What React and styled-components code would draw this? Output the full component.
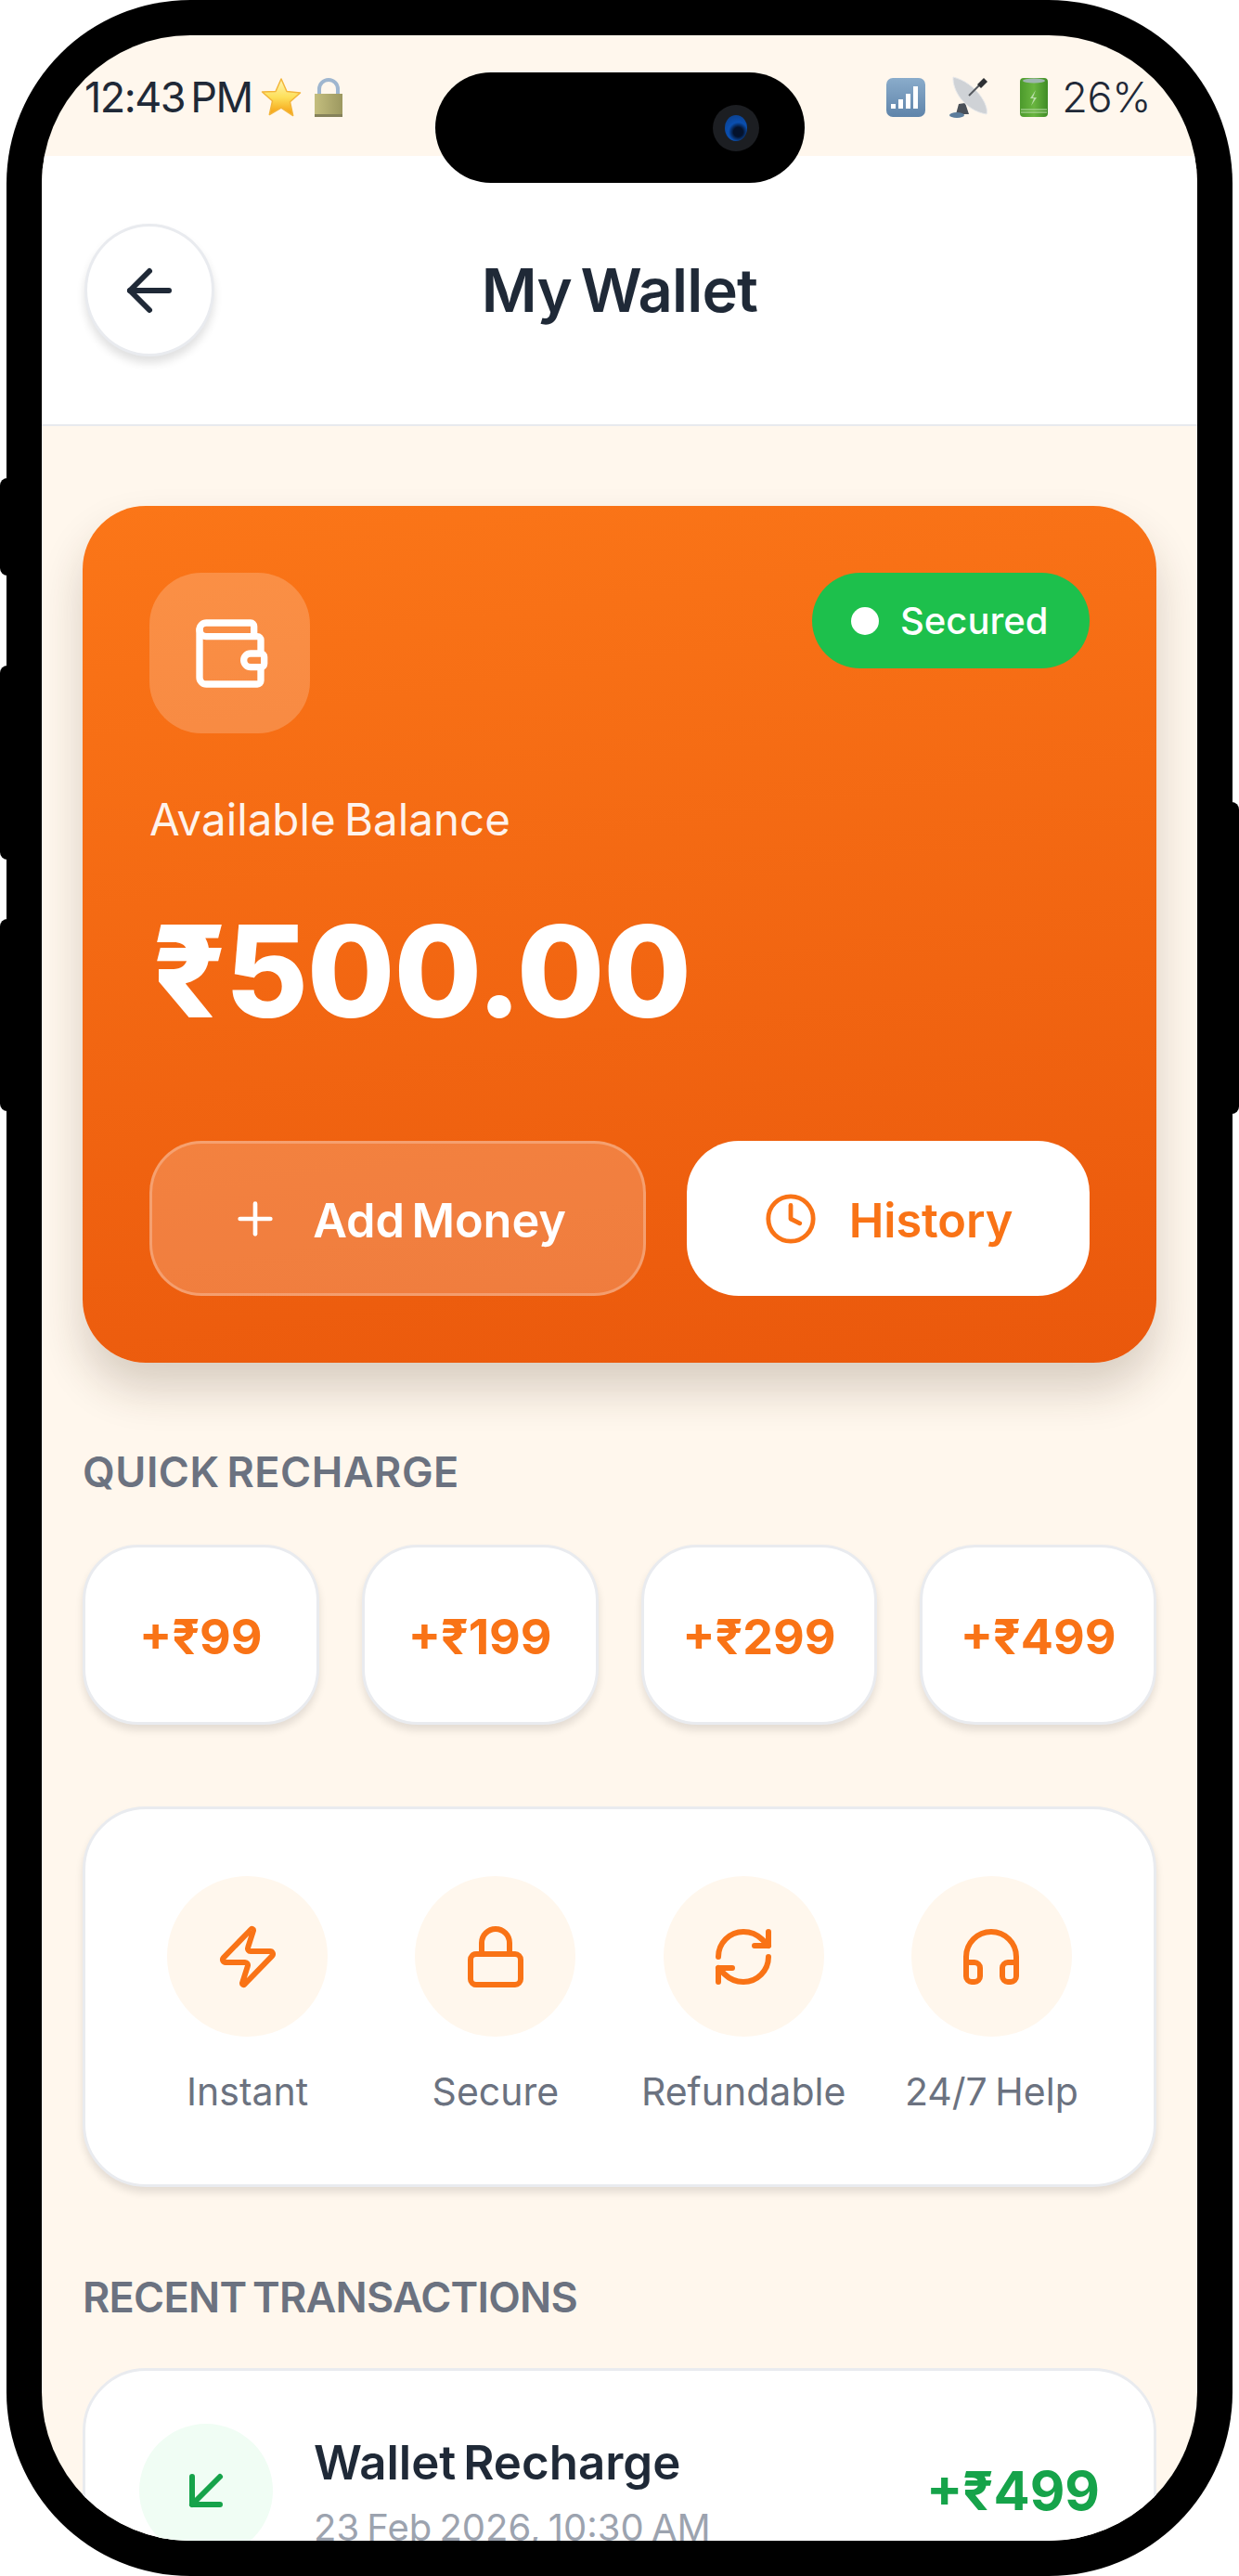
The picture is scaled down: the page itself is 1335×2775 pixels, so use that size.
import React from 'react';
import styled, { createGlobalStyle } from 'styled-components';
import {
  ArrowDownLeft,
  ArrowLeft,
  Clock,
  Headphones,
  Lock,
  Plus,
  RefreshCw,
  Wallet,
  Zap,
} from 'lucide-react';

const GlobalStyle = createGlobalStyle`
  * {
    box-sizing: border-box;
  }
  html, body {
    margin: 0;
    background: #fff;
    font-family: Inter, 'Liberation Sans', sans-serif;
  }
`;

const Page = styled.div`
  width: 1335px;
  height: 2775px;
  padding: 0 7px;
  overflow: hidden;
`;

const Phone = styled.div`
  position: relative;
  width: 1321px;
  height: 2775px;
  padding: 38px;
  background: #000;
  border-radius: 198px;
`;

const SideButton = styled.span`
  position: absolute;
  top: ${(p) => p.$top}px;
  height: ${(p) => p.$height}px;
  width: 20px;
  background: #000;
  border-radius: 8px;
  ${(p) => (p.$right ? 'right: -7px;' : 'left: -7px;')}
`;

const Notch = styled.div`
  position: absolute;
  top: 78px;
  left: 462px;
  width: 398px;
  height: 119px;
  padding-right: 49px;
  display: flex;
  align-items: center;
  justify-content: flex-end;
  background: #000;
  border-radius: 60px;
  z-index: 2;
`;

const Camera = styled.span`
  width: 50px;
  height: 50px;
  display: flex;
  align-items: center;
  justify-content: center;
  border-radius: 50%;
  background: #1c1e22;

  &::after {
    content: '';
    width: 24px;
    height: 28px;
    border-radius: 50%;
    background: radial-gradient(circle at 60% 65%, #04122c 0 22%, #0a4fb0 45%, #0c3a80 100%);
  }
`;

const Screen = styled.div`
  width: 1245px;
  height: 2699px;
  display: flex;
  flex-direction: column;
  overflow: hidden;
  background: #fff7ed;
  border-radius: 160px;
`;

const StatusBar = styled.div`
  height: 130px;
  flex-shrink: 0;
  padding: 38px 50px 0 46px;
  display: flex;
  justify-content: space-between;
  color: #1f2937;
  font-size: 45px;
  line-height: 58px;
`;

const StatusGroup = styled.div`
  display: flex;
  align-items: center;
  height: 58px;
`;

const StatusText = styled.span`
  font-weight: ${(p) => p.$weight || 400};
  letter-spacing: ${(p) => p.$spacing || 0}px;
  word-spacing: -5px;
`;

const Header = styled.header`
  height: 291px;
  flex-shrink: 0;
  padding: 0 46px;
  display: grid;
  grid-template-columns: 140px 1fr 140px;
  align-items: center;
  background: #fff;
  border-bottom: 2px solid #e8eaee;
`;

const BackButton = styled.button`
  width: 140px;
  height: 143px;
  padding: 0;
  display: flex;
  align-items: center;
  justify-content: center;
  color: #1f2937;
  background: #fff;
  border: 3px solid #e9ebef;
  border-radius: 50%;
  box-shadow: 0 7px 10px rgba(0, 0, 0, 0.12);
`;

const Title = styled.h1`
  margin: 0;
  text-align: center;
  font-size: 65px;
  font-weight: 600;
  line-height: 80px;
  color: #1f2937;
  letter-spacing: -0.8px;
  word-spacing: -6px;
`;

const Content = styled.main`
  padding: 86px 44px 0;
`;

const BalanceCard = styled.section`
  padding: 72px;
  color: #fff;
  background: linear-gradient(172deg, #fb7618 0%, #ea580c 100%);
  border-radius: 68px;
  box-shadow: 0 28px 48px rgba(60, 40, 20, 0.2);
`;

const CardTop = styled.div`
  display: flex;
  align-items: flex-start;
  justify-content: space-between;
`;

const WalletTile = styled.div`
  width: 173px;
  height: 173px;
  display: flex;
  align-items: center;
  justify-content: center;
  background: rgba(255, 255, 255, 0.2);
  border-radius: 56px;
`;

const SecuredPill = styled.div`
  width: 299px;
  height: 103px;
  padding-left: 42px;
  display: flex;
  align-items: center;
  gap: 23px;
  background: #1dc04c;
  border-radius: 52px;
  font-size: 40px;
  font-weight: 500;
`;

const Dot = styled.span`
  width: 30px;
  height: 30px;
  border-radius: 50%;
  background: #fff;
`;

const BalanceLabel = styled.div`
  margin-top: 63px;
  font-size: 47.5px;
  line-height: 60px;
  opacity: 0.92;
  font-weight: 400;
  word-spacing: -4px;
`;

const BalanceAmount = styled.div`
  margin-top: 53px;
  padding-left: 3px;
  font-size: 137px;
  font-weight: 800;
  line-height: 160px;
  letter-spacing: -1.2px;
`;

const CardActions = styled.div`
  margin-top: 103px;
  display: grid;
  grid-template-columns: 535px 1fr;
  gap: 44px;
`;

const ActionButton = styled.button`
  height: 167px;
  padding: 4px 0 0;
  display: flex;
  align-items: center;
  justify-content: center;
  gap: 34px;
  font-family: inherit;
  font-size: 50.5px;
  font-weight: 600;
  word-spacing: -5px;
  letter-spacing: -0.1px;
  border-radius: 56px;
  color: ${(p) => (p.$solid ? '#f97316' : '#fff')};
  background: ${(p) => (p.$solid ? '#fff' : 'rgba(255, 255, 255, 0.2)')};
  border: ${(p) => (p.$solid ? 'none' : '3px solid rgba(255, 255, 255, 0.25)')};

  svg {
    margin-top: -4px;
  }
`;

const SectionTitle = styled.h2`
  margin: ${(p) => p.$top}px 0 ${(p) => p.$bottom}px;
  font-size: 45px;
  font-weight: 600;
  line-height: 60px;
  color: #6b7280;
  letter-spacing: ${(p) => p.$spacing}px;
  word-spacing: -4px;
`;

const AmountGrid = styled.div`
  display: grid;
  grid-template-columns: repeat(4, 1fr);
  gap: 46px;
`;

const AmountTile = styled.button`
  height: 194px;
  padding: 4px 0 0;
  font-family: inherit;
  font-size: 52px;
  font-weight: 700;
  color: #f97316;
  background: #fff;
  border: 3px solid #e9ebef;
  border-radius: 60px;
  box-shadow: 0 6px 8px rgba(0, 0, 0, 0.11);
`;

const FeatureCard = styled.section`
  margin-top: 88px;
  padding: 72px 41px;
  display: grid;
  grid-template-columns: repeat(4, 1fr);
  background: #fff;
  border: 3px solid #e9ebef;
  border-radius: 68px;
  box-shadow: 0 6px 8px rgba(0, 0, 0, 0.11);
`;

const Feature = styled.div`
  display: flex;
  flex-direction: column;
  align-items: center;
`;

const FeatureIcon = styled.div`
  width: 173px;
  height: 173px;
  display: flex;
  align-items: center;
  justify-content: center;
  color: #f97316;
  background: #fff7ed;
  border-radius: 50%;
`;

const FeatureLabel = styled.div`
  margin-top: 31px;
  font-size: 41px;
  line-height: 56px;
  color: #6b7280;
  white-space: nowrap;
  word-spacing: -3px;
`;

const TransactionCard = styled.article`
  padding: 57px 58px;
  display: flex;
  align-items: center;
  gap: 44px;
  background: #fff;
  border: 3px solid #e9ebef;
  border-radius: 68px;
`;

const TransactionIcon = styled.div`
  width: 144px;
  height: 144px;
  flex-shrink: 0;
  display: flex;
  align-items: center;
  justify-content: center;
  color: #16a34a;
  background: #f0fdf4;
  border-radius: 50%;
`;

const TransactionText = styled.div`
  flex: 1;
`;

const TransactionName = styled.div`
  font-size: 51px;
  font-weight: 600;
  line-height: 75px;
  color: #1f2937;
  word-spacing: -5px;
`;

const TransactionDate = styled.div`
  margin-top: 5px;
  font-size: 40px;
  line-height: 56px;
  color: #9ca3af;
  word-spacing: -3px;
`;

const TransactionAmount = styled.div`
  font-size: 58px;
  font-weight: 700;
  color: #16a34a;
`;

const StarIcon = styled.svg`
  margin-left: 9px;
`;

const LockIcon = styled.svg`
  margin-left: 12px;
`;

const IconGap = styled.span`
  width: ${(p) => p.$width}px;
`;

const StarEmoji = () => (
  <StarIcon width="44" height="44" viewBox="0 0 44 44">
    <defs>
      <linearGradient id="starFill" x1="0" y1="0" x2="0" y2="1">
        <stop offset="0" stopColor="#fff6b8" />
        <stop offset="0.5" stopColor="#fde05a" />
        <stop offset="1" stopColor="#f59b0c" />
      </linearGradient>
    </defs>
    <path
      d="M22 2l6 13.5 14.5 1.5-11 9.8 3.2 14.7L22 33.2 9.3 40.5l3.2-14.7-11-9.8L16 15.5z"
      fill="url(#starFill)"
      stroke="#f3b53a"
      strokeWidth="1.5"
      strokeLinejoin="round"
    />
  </StarIcon>
);

const LockEmoji = () => (
  <LockIcon width="34" height="44" viewBox="0 0 34 44">
    <defs>
      <linearGradient id="lockFill" x1="0" y1="0" x2="1" y2="0">
        <stop offset="0" stopColor="#c4be7e" />
        <stop offset="1" stopColor="#9c9860" />
      </linearGradient>
    </defs>
    <path d="M7 20V13a10 10 0 0 1 20 0v7" fill="none" stroke="#9fb6cf" strokeWidth="4" />
    <rect x="2" y="18" width="30" height="25" fill="url(#lockFill)" />
    <rect x="2" y="40" width="30" height="3" fill="#85815a" />
  </LockIcon>
);

const SignalEmoji = () => (
  <svg width="44" height="44" viewBox="0 0 44 44">
    <defs>
      <linearGradient id="signalFill" x1="0" y1="0" x2="0" y2="1">
        <stop offset="0" stopColor="#8aaccb" />
        <stop offset="1" stopColor="#5f84aa" />
      </linearGradient>
    </defs>
    <rect x="1" y="1" width="42" height="42" rx="7" fill="url(#signalFill)" />
    <rect x="6" y="29" width="5" height="5" fill="#fff" />
    <rect x="14" y="24" width="5" height="10" fill="#fff" />
    <rect x="22" y="18" width="5" height="16" fill="#fff" />
    <rect x="30" y="10" width="5" height="24" fill="#fff" />
  </svg>
);

const DishEmoji = () => (
  <svg width="44" height="46" viewBox="0 0 44 46">
    <path d="M10 30l-3 11h14l-4-12z" fill="#4a5058" />
    <ellipse cx="8" cy="42" rx="8" ry="3" fill="#5c7d9c" />
    <path d="M4 1c-1 14 12 36 36 40 3-10-12-34-36-40z" fill="#cfd2d6" stroke="#e8e9eb" />
    <path d="M21 21L34 8" stroke="#55595f" strokeWidth="2" />
    <path d="M30 9l7-7 4 4-7 7z" fill="#2e3034" />
  </svg>
);

const BatteryEmoji = () => (
  <svg width="30" height="44" viewBox="0 0 30 44">
    <defs>
      <linearGradient id="batteryFill" x1="0" y1="0" x2="1" y2="0">
        <stop offset="0" stopColor="#4c9a2c" />
        <stop offset="0.5" stopColor="#69b53f" />
        <stop offset="1" stopColor="#3f8c26" />
      </linearGradient>
    </defs>
    <rect x="0" y="1" width="30" height="42" rx="4" fill="url(#batteryFill)" />
    <ellipse cx="15" cy="4" rx="12" ry="2.5" fill="#9fb7b0" />
    <path d="M17 14l-6 9h4l-3 8 6-9h-4z" fill="#b9dca8" />
    <path d="M1 35h28M1 38h28" stroke="#b9dca8" strokeWidth="1" />
  </svg>
);

const amounts = [99, 199, 299, 499];

const features = [
  { label: 'Instant', icon: Zap },
  { label: 'Secure', icon: Lock },
  { label: 'Refundable', icon: RefreshCw },
  { label: '24/7 Help', icon: Headphones },
];

const App = () => {
  return (
    <Page>
      <GlobalStyle />
      <Phone>
        <SideButton $top={515} $height={105} />
        <SideButton $top={717} $height={209} />
        <SideButton $top={990} $height={207} />
        <SideButton $right $top={864} $height={336} />
        <Notch>
          <Camera />
        </Notch>
        <Screen>
          <StatusBar>
            <StatusGroup>
              <StatusText $spacing={-1.5}>12:43 PM</StatusText>
              <StarEmoji />
              <LockEmoji />
            </StatusGroup>
            <StatusGroup>
              <SignalEmoji />
              <IconGap $width={25} />
              <DishEmoji />
              <IconGap $width={32} />
              <BatteryEmoji />
              <IconGap $width={15} />
              <StatusText $weight={300} $spacing={-0.4}>26%</StatusText>
            </StatusGroup>
          </StatusBar>
          <Header>
            <BackButton>
              <ArrowLeft size={72} />
            </BackButton>
            <Title>My Wallet</Title>
          </Header>
          <Content>
            <BalanceCard>
              <CardTop>
                <WalletTile>
                  <Wallet size={88} color="#fff" />
                </WalletTile>
                <SecuredPill>
                  <Dot />
                  Secured
                </SecuredPill>
              </CardTop>
              <BalanceLabel>Available Balance</BalanceLabel>
              <BalanceAmount>₹500.00</BalanceAmount>
              <CardActions>
                <ActionButton>
                  <Plus size={56} />
                  Add Money
                </ActionButton>
                <ActionButton $solid>
                  <Clock size={58} />
                  History
                </ActionButton>
              </CardActions>
            </BalanceCard>

            <SectionTitle $top={88} $bottom={48} $spacing={0.5}>QUICK RECHARGE</SectionTitle>
            <AmountGrid>
              {amounts.map((amount) => (
                <AmountTile key={amount}>+₹{amount}</AmountTile>
              ))}
            </AmountGrid>

            <FeatureCard>
              {features.map(({ label, icon: Icon }) => (
                <Feature key={label}>
                  <FeatureIcon>
                    <Icon size={72} />
                  </FeatureIcon>
                  <FeatureLabel>{label}</FeatureLabel>
                </Feature>
              ))}
            </FeatureCard>

            <SectionTitle $top={89} $bottom={46} $spacing={-0.75}>RECENT TRANSACTIONS</SectionTitle>
            <TransactionCard>
              <TransactionIcon>
                <ArrowDownLeft size={72} />
              </TransactionIcon>
              <TransactionText>
                <TransactionName>Wallet Recharge</TransactionName>
                <TransactionDate>23 Feb 2026, 10:30 AM</TransactionDate>
              </TransactionText>
              <TransactionAmount>+₹499</TransactionAmount>
            </TransactionCard>
          </Content>
        </Screen>
      </Phone>
    </Page>
  );
};

export default App;
